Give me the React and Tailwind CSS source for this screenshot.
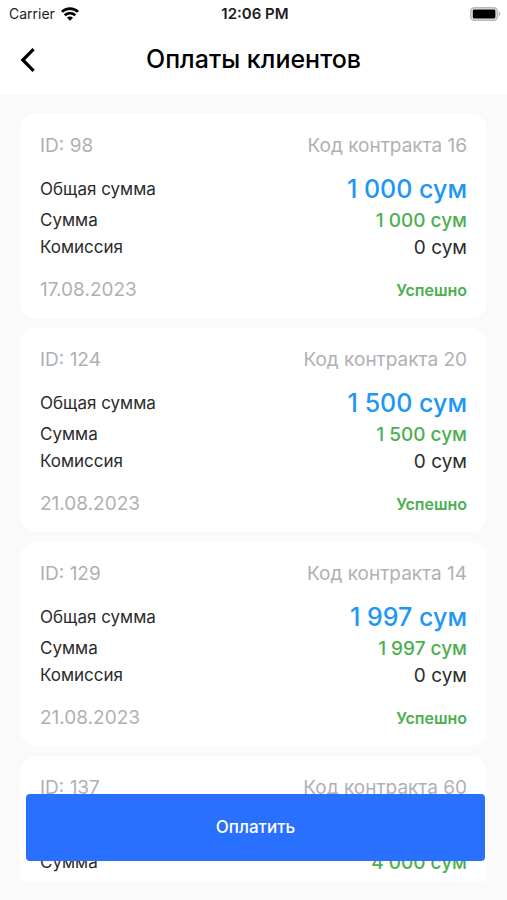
import React from 'react';

const payments = [
    { id: 98, contract: 16, total: '1 000', amount: '1 000', commission: '0', date: '17.08.2023', status: 'Успешно' },
    { id: 124, contract: 20, total: '1 500', amount: '1 500', commission: '0', date: '21.08.2023', status: 'Успешно' },
    { id: 129, contract: 14, total: '1 997', amount: '1 997', commission: '0', date: '21.08.2023', status: 'Успешно' },
    { id: 137, contract: 60, total: '4 000', amount: '4 000', commission: '0', date: '22.08.2023', status: 'Успешно' },
];

const StatusBar = () => (
    <div className="grid grid-cols-3 items-center h-7 pl-[9px] pr-[6px] text-sm text-[#1c1c1e]">
        <div className="flex items-center gap-[6px]">
            <span>Carrier</span>
            <svg width="18" height="14" viewBox="0 0 18 14" fill="none" stroke="#000" strokeWidth="2.7" aria-hidden="true">
                <path d="M0.9 4.9a11.5 11.5 0 0 1 16.2 0" />
                <path d="M3.7 8.3a7.5 7.5 0 0 1 10.6 0" />
                <path d="M9 13.8 6 10.8a4.2 4.2 0 0 1 6 0z" fill="#000" stroke="none" />
            </svg>
        </div>
        <span className="text-center text-[15px] font-semibold">12:06 PM</span>
        <svg className="justify-self-end" width="31" height="14" viewBox="0 0 31 14" aria-hidden="true">
            <rect x="0.8" y="0.8" width="26.6" height="12.4" rx="3.6" fill="#e8e8e8" stroke="#b9b9b9" strokeWidth="1.5" />
            <rect x="2.8" y="2.6" width="22.6" height="8.8" rx="1.4" fill="#000" />
            <path d="M28.8 4.8c2 .6 2 3.8 0 4.4z" fill="#b5b5b5" />
        </svg>
    </div>
);

const Header = () => (
    <header className="grid grid-cols-[60px_1fr_60px] items-center h-[67px] pb-[3px]">
        <button type="button" aria-label="Назад" className="flex items-center h-11 pl-5">
            <svg width="16" height="24" viewBox="0 0 16 24" fill="none" stroke="#000" strokeWidth="3.2" aria-hidden="true">
                <path d="M13.6 1.2 2.8 12l10.8 10.8" />
            </svg>
        </button>
        <h1 className="text-center text-[25px] font-medium text-black whitespace-nowrap">Оплаты клиентов</h1>
    </header>
);

const PaymentCard = ({ payment }) => (
    <li className="shrink-0 rounded-2xl bg-white px-5 pt-[21px] pb-[15px]">
        <div className="flex justify-between text-[19px] leading-[22px] text-[#b0b0b4]">
            <span>ID: {payment.id}</span>
            <span>Код контракта {payment.contract}</span>
        </div>
        <dl className="mt-4 text-[#2b2b2b]">
            <div className="flex items-center justify-between h-[34px]">
                <dt className="text-[17px]">Общая сумма</dt>
                <dd className="text-[25px] font-medium text-[#2196f3]">{payment.total} сум</dd>
            </div>
            <div className="flex items-center justify-between h-7">
                <dt className="text-[17px]">Сумма</dt>
                <dd className="text-[19px] font-medium text-[#4caf50]">{payment.amount} сум</dd>
            </div>
            <div className="flex items-center justify-between h-[26px]">
                <dt className="text-[17px]">Комиссия</dt>
                <dd className="text-[19px]">{payment.commission} сум</dd>
            </div>
        </dl>
        <div className="mt-4 flex items-center justify-between h-[26px]">
            <span className="text-[19px] text-[#b0b0b4]">{payment.date}</span>
            <span className="text-base font-semibold text-[#4caf50]">{payment.status}</span>
        </div>
    </li>
);

const App = () => {
    return (
        <div className="relative flex flex-col h-screen bg-[#fafafa] font-['Inter','Liberation_Sans',sans-serif]">
            <div className="bg-white">
                <StatusBar />
                <Header />
            </div>

            <main className="flex-1 min-h-0 px-5 pt-[19px] pb-[19px]">
                <ul className="flex flex-col gap-[10px] h-full overflow-y-auto [scrollbar-width:none]">
                    {payments.map((payment) => (
                        <PaymentCard key={payment.id} payment={payment} />
                    ))}
                </ul>
            </main>

            {/* Pay button stays above the scrolling list */}
            <div className="absolute inset-x-0 bottom-[39px] pl-[26px] pr-[22px]">
                <button type="button" className="w-full h-[67px] rounded bg-[#2970ff] text-[17px] font-medium text-white">
                    Оплатить
                </button>
            </div>
        </div>
    );
};

export default App;
